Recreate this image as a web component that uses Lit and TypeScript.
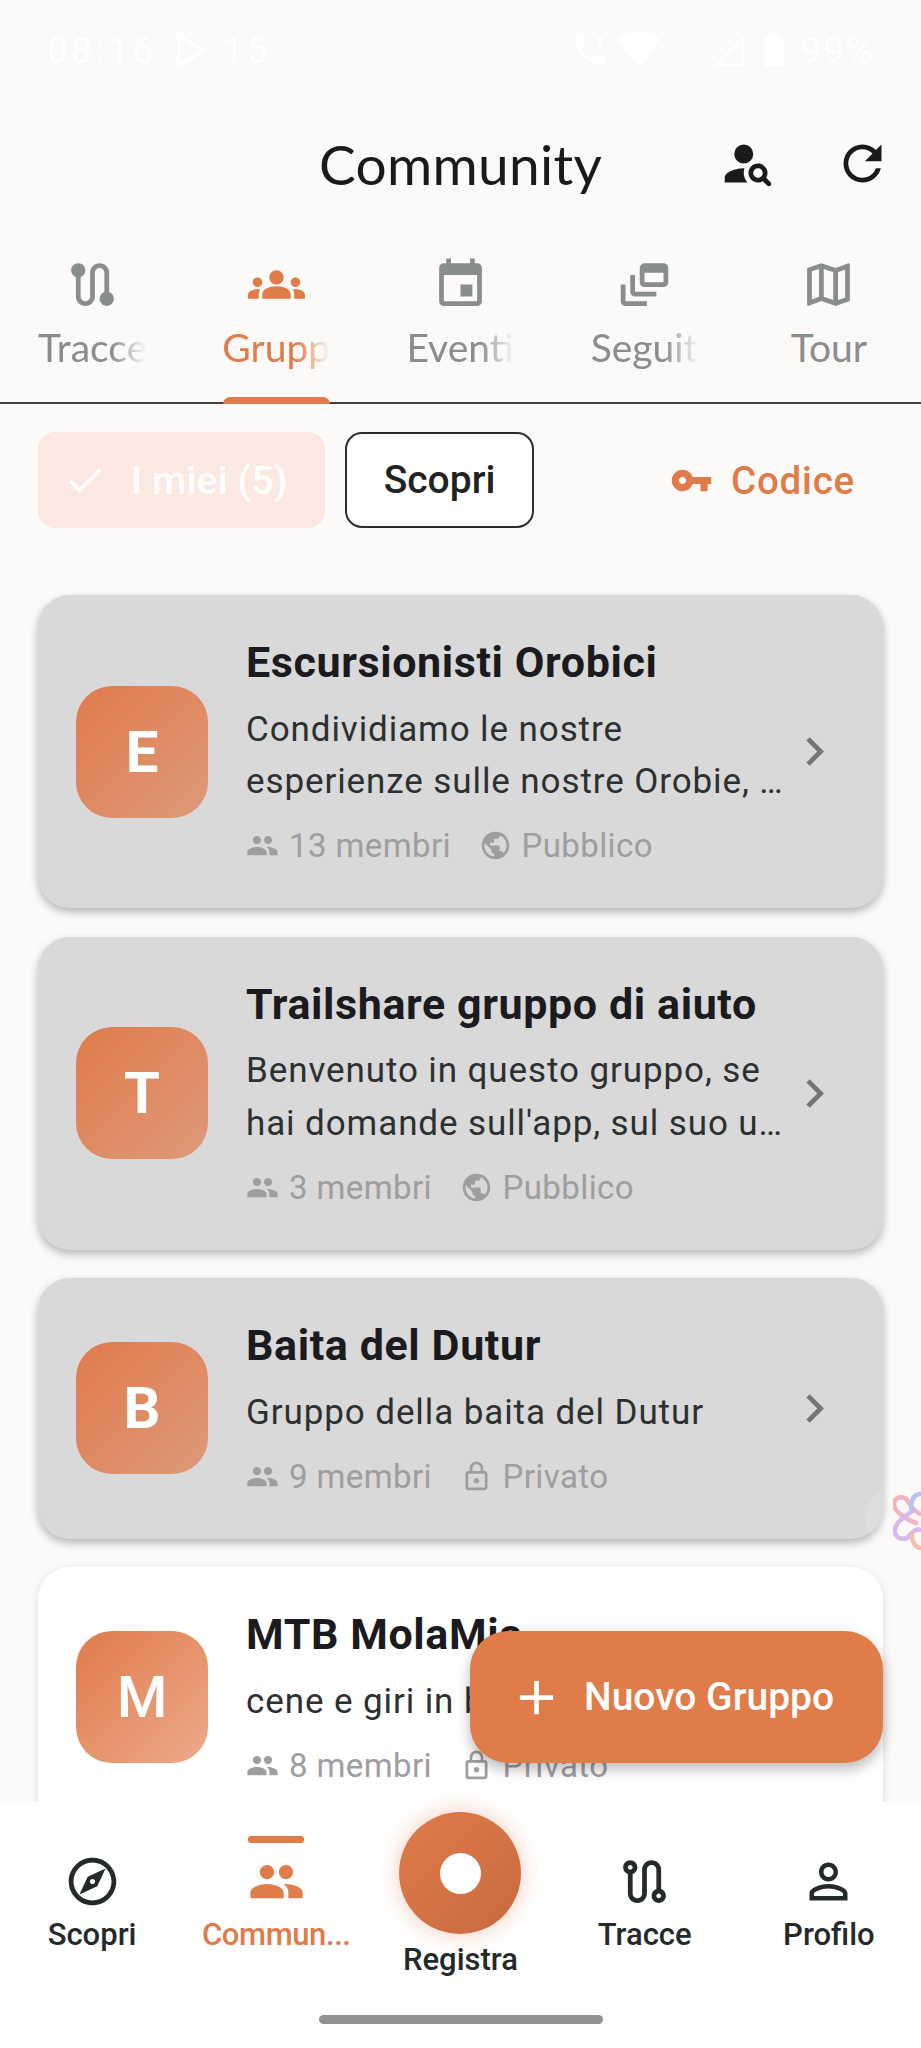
import { LitElement, html, css } from "lit";
import { customElement } from "lit/decorators.js";

const P = {
  route: "M19 15.18V7c0-2.21-1.79-4-4-4s-4 1.79-4 4v10c0 1.1-.9 2-2 2s-2-.9-2-2V8.82C8.16 8.4 9 7.3 9 6c0-1.66-1.34-3-3-3S3 4.34 3 6c0 1.3.84 2.4 2 2.82V17c0 2.21 1.79 4 4 4s4-1.79 4-4V7c0-1.1.9-2 2-2s2 .9 2 2v8.18c-1.16.41-2 1.51-2 2.82 0 1.66 1.34 3 3 3s3-1.34 3-3c0-1.3-.84-2.4-2-2.82z",
  routeOutline: "M19 15.18V7c0-2.21-1.79-4-4-4s-4 1.79-4 4v10c0 1.1-.9 2-2 2s-2-.9-2-2V8.82C8.16 8.4 9 7.3 9 6c0-1.66-1.34-3-3-3S3 4.34 3 6c0 1.3.84 2.4 2 2.82V17c0 2.21 1.79 4 4 4s4-1.79 4-4V7c0-1.1.9-2 2-2s2 .9 2 2v8.18c-1.16.41-2 1.51-2 2.82 0 1.66 1.34 3 3 3s3-1.34 3-3c0-1.3-.84-2.4-2-2.82zM6 5c.55 0 1 .45 1 1s-.45 1-1 1-1-.45-1-1 .45-1 1-1zm12 14c-.55 0-1-.45-1-1s.45-1 1-1 1 .45 1 1-.45 1-1 1z",
  groups: "M12 12.75c1.63 0 3.07.39 4.24.9 1.08.48 1.76 1.56 1.76 2.73V18H6v-1.61c0-1.18.68-2.26 1.76-2.73 1.17-.52 2.61-.91 4.24-.91zM4 13c1.1 0 2-.9 2-2s-.9-2-2-2-2 .9-2 2 .9 2 2 2zm1.13 1.1c-.37-.06-.74-.1-1.13-.1-.99 0-1.93.21-2.78.58C.48 14.9 0 15.62 0 16.43V18h4.5v-1.61c0-.83.23-1.61.63-2.29zM20 13c1.1 0 2-.9 2-2s-.9-2-2-2-2 .9-2 2 .9 2 2 2zm4 3.43c0-.81-.48-1.53-1.22-1.85-.85-.37-1.79-.58-2.78-.58-.39 0-.76.04-1.13.1.4.68.63 1.46.63 2.29V18H24v-1.57zM12 6c1.66 0 3 1.34 3 3s-1.34 3-3 3-3-1.34-3-3 1.34-3 3-3z",
  event: "M17 12h-5v5h5v-5zM16 1v2H8V1H6v2H5c-1.11 0-1.99.9-1.99 2L3 19c0 1.1.89 2 2 2h14c1.1 0 2-.9 2-2V5c0-1.1-.9-2-2-2h-1V1h-2zm3 18H5V8h14v11z",
  feed: "M8 8H6v7c0 1.1.9 2 2 2h9v-2H8V8zM20 3h-8c-1.1 0-2 .9-2 2v6c0 1.1.9 2 2 2h8c1.1 0 2-.9 2-2V5c0-1.1-.9-2-2-2zm0 8h-8V7h8v4zM4 12H2v7c0 1.1.9 2 2 2h9v-2H4v-7z",
  map: "M20.5 3l-.16.03L15 5.1 9 3 3.36 4.9c-.21.07-.36.25-.36.48V20.5c0 .28.22.5.5.5l.16-.03L9 18.9l6 2.1 5.64-1.9c.21-.07.36-.25.36-.48V3.5c0-.28-.22-.5-.5-.5zM10 5.47l4 1.4v11.66l-4-1.4V5.47zm-5 .99l3-1.01v11.7l-3 1.16V6.46zm14 11.08l-3 1.01V6.86l3-1.16v11.84z",
  key: "M12.65 10C11.83 7.67 9.61 6 7 6c-3.31 0-6 2.69-6 6s2.69 6 6 6c2.61 0 4.83-1.67 5.65-4H17v4h4v-4h2v-4H12.65zM7 14c-1.1 0-2-.9-2-2s.9-2 2-2 2 .9 2 2-.9 2-2 2z",
  check: "M9 16.17L4.83 12l-1.42 1.41L9 19 21 7l-1.41-1.41z",
  personSearch: "M10 4a4 4 0 1 0 0 8 4 4 0 0 0 0-8zM10.35 14.01C7.62 13.91 2 15.27 2 18v2h9.54c-2.47-2.76-1.23-5.97-1.19-5.99zM19.43 18.02c.47-.8.7-1.77.48-2.82-.34-1.64-1.72-2.95-3.38-3.16-2.63-.34-4.85 1.87-4.5 4.5.22 1.66 1.52 3.04 3.16 3.38 1.05.22 2.02-.01 2.82-.48l1.86 1.86c.39.39 1.02.39 1.41 0 .39-.39.39-1.02 0-1.41l-1.85-1.87zM16 18c-1.1 0-2-.9-2-2s.9-2 2-2 2 .9 2 2-.9 2-2 2z",
  refresh: "M17.65 6.35C16.2 4.9 14.21 4 12 4c-4.42 0-7.99 3.58-7.99 8s3.57 8 7.99 8c3.73 0 6.84-2.55 7.73-6h-2.08c-.82 2.33-3.04 4-5.65 4-3.31 0-6-2.69-6-6s2.69-6 6-6c1.66 0 3.14.69 4.22 1.78L13 11h7V4l-2.35 2.35z",
  people: "M16 11c1.66 0 2.99-1.34 2.99-3S17.66 5 16 5c-1.66 0-3 1.34-3 3s1.34 3 3 3zm-8 0c1.66 0 2.99-1.34 2.99-3S9.66 5 8 5C6.34 5 5 6.34 5 8s1.34 3 3 3zm0 2c-2.33 0-7 1.17-7 3.5V19h14v-2.5c0-2.33-4.67-3.5-7-3.5zm8 0c-.29 0-.62.02-.97.05 1.16.84 1.97 1.97 1.97 3.45V19h6v-2.5c0-2.33-4.67-3.5-7-3.5z",
  globe: "M12 2C6.48 2 2 6.48 2 12s4.48 10 10 10 10-4.48 10-10S17.52 2 12 2zm-1 17.93c-3.95-.49-7-3.85-7-7.93 0-.62.08-1.21.21-1.79L9 15v1c0 1.1.9 2 2 2v1.93zm6.9-2.54c-.26-.81-1-1.39-1.9-1.39h-1v-3c0-.55-.45-1-1-1H8v-2h2c.55 0 1-.45 1-1V7h2c1.1 0 2-.9 2-2v-.41c2.93 1.19 5 4.06 5 7.41 0 2.08-.8 3.97-2.1 5.39z",
  lock: "M18 8h-1V6c0-2.76-2.24-5-5-5S7 3.24 7 6v2H6c-1.1 0-2 .9-2 2v10c0 1.1.9 2 2 2h12c1.1 0 2-.9 2-2V10c0-1.1-.9-2-2-2zM9 6c0-1.66 1.34-3 3-3s3 1.34 3 3v2H9V6zm9 14H6V10h12v10zm-6-3c1.1 0 2-.9 2-2s-.9-2-2-2-2 .9-2 2 .9 2 2 2z",
  chevron: "M10 6L8.59 7.41 13.17 12l-4.58 4.59L10 18l6-6z",
  add: "M19 13h-6v6h-2v-6H5v-2h6V5h2v6h6v2z",
  explore: "M12 2C6.48 2 2 6.48 2 12s4.48 10 10 10 10-4.48 10-10S17.52 2 12 2zm0 18c-4.41 0-8-3.59-8-8s3.59-8 8-8 8 3.59 8 8-3.59 8-8 8zm-5.5-2.5l7.51-3.49L17.5 6.5 9.99 9.99 6.5 17.5zm5.5-6.6c.61 0 1.1.49 1.1 1.1s-.49 1.1-1.1 1.1-1.1-.49-1.1-1.1.49-1.1 1.1-1.1z",
  person: "M12 5.9c1.16 0 2.1.94 2.1 2.1s-.94 2.1-2.1 2.1S9.9 9.16 9.9 8s.94-2.1 2.1-2.1m0 9c2.97 0 6.1 1.46 6.1 2.1v1.1H5.9V17c0-.64 3.13-2.1 6.1-2.1M12 4C9.79 4 8 5.79 8 8s1.79 4 4 4 4-1.79 4-4-1.79-4-4-4zm0 9c-2.67 0-8 1.34-8 4v3h16v-3c0-2.66-5.33-4-8-4z",
  phone: "M20 15.5c-1.25 0-2.45-.2-3.57-.57-.35-.11-.74-.03-1.02.24l-2.2 2.2c-2.83-1.44-5.15-3.75-6.59-6.59l2.2-2.21c.28-.26.36-.65.25-1C8.7 6.45 8.5 5.25 8.5 4c0-.55-.45-1-1-1H4c-.55 0-1 .45-1 1 0 9.39 7.61 17 17 17 .55 0 1-.45 1-1v-3.5c0-.55-.45-1-1-1zM15 3h6l-3 7z",
  wifi: "M12 21L0 6.5C3.2 4 7.4 2.5 12 2.5S20.8 4 24 6.5z",
  signal: "M22 2v20H2zM20 7L7 20h13z",
  battery: "M9 2h6v2h2c.6 0 1 .4 1 1v16c0 .6-.4 1-1 1H7c-.6 0-1-.4-1-1V5c0-.6.4-1 1-1h2z",
  play: "M5 2l16 10-16 10zM7 6v12l10-6z",
};

const ico = (d: string, cls: string) =>
  html`<svg class=${cls} viewBox="0 0 24 24" fill="currentColor"><path d=${d}></path></svg>`;

type Group = { l: string; n: string; d: string; m: string; v: string; lock: boolean; plain?: boolean };
const GROUPS: Group[] = [
  { l: "E", n: "Escursionisti Orobici", d: "Condividiamo le nostre esperienze sulle nostre Orobie, …", m: "13 membri", v: "Pubblico", lock: false },
  { l: "T", n: "Trailshare gruppo di aiuto", d: "Benvenuto in questo gruppo, se hai domande sull'app, sul suo u…", m: "3 membri", v: "Pubblico", lock: false },
  { l: "B", n: "Baita del Dutur", d: "Gruppo della baita del Dutur", m: "9 membri", v: "Privato", lock: true },
  { l: "M", n: "MTB MolaMia", d: "cene e giri in bici", m: "8 membri", v: "Privato", lock: true, plain: true },
];

@customElement("app-root")
export class AppRoot extends LitElement {
  static styles = css`
    :host { display: block; width: 921px; height: 2048px; position: relative; overflow: hidden; background: #fbfaf8; font-family: Roboto, sans-serif; color: #1c1c1e; }
    .page { display: flex; flex-direction: column; height: 2048px; }
    .status { display: flex; align-items: center; height: 40px; padding: 30px 46px 10px 47px; color: #fff; font-size: 37px; font-weight: 400; letter-spacing: 3.5px; gap: 10px; }
    .status svg { width: 40px; height: 40px; flex: none; }
    .status .play { width: 46px; height: 46px; }
    .status .sp { flex: 1; }
    .status .right { display: flex; align-items: center; gap: 6px; letter-spacing: 2px; }
    .status .wifi { width: 46px; height: 46px; margin-right: 40px; }
    .head { display: grid; grid-template-columns: 1fr auto 1fr; align-items: center; height: 166px; }
    .title { font-family: Lato, sans-serif; font-size: 55px; font-weight: 400; color: #1a1a1a; letter-spacing: 0.3px; padding-top: 2px; }
    .actions { display: flex; justify-content: flex-end; gap: 57px; padding-right: 30px; color: #1a1a1a; }
    .i57 { width: 57px; height: 57px; display: block; flex: none; }
    .tabs { display: grid; grid-template-columns: repeat(5, 1fr); border-bottom: 2px solid #3f4241; height: 158px; box-sizing: border-box; padding-top: 10px; }
    .tab { display: flex; flex-direction: column; align-items: center; color: #8a8d8d; height: 146px; }
    .tab.on { color: #e07b4a; }
    .tlabel { width: 108px; height: 46px; margin-top: 11px; font-family: Lato, sans-serif; font-size: 39px; line-height: 46px; white-space: nowrap; overflow: hidden; -webkit-mask-image: linear-gradient(90deg, #000 68%, transparent 100%); mask-image: linear-gradient(90deg, #000 68%, transparent 100%); }
    .tlabel.whole { text-align: center; -webkit-mask-image: none; mask-image: none; }
    .tbar { width: 107px; height: 7px; margin-top: auto; margin-bottom: -2px; background: #e07b4a; border-radius: 7px 7px 0 0; position: relative; }
    .filters { display: flex; align-items: center; gap: 20px; padding: 28px 38px 0; }
    .chip { height: 96px; box-sizing: border-box; border-radius: 17px; display: flex; align-items: center; font-size: 39px; font-weight: 500; }
    .chip.sel { width: 287px; background: #fbe8e0; color: #fff; padding-left: 25px; gap: 24px; font-size: 39.5px; }
    .chip.sel svg { width: 44px; height: 44px; }
    .chip.out { width: 189px; justify-content: center; background: #fff; border: 2px solid #2b2d2d; color: #1f2323; }
    .code { margin-left: auto; display: flex; align-items: center; gap: 18px; color: #e07b4a; font-size: 38.5px; font-weight: 500; letter-spacing: .8px; padding-right: 28px; }
    .code svg { width: 43px; height: 43px; }
    .list { flex: 1; min-height: 0; overflow: hidden; display: flex; flex-direction: column; gap: 28.5px; padding: 67px 38px 0; }
    .card { flex: none; display: flex; align-items: center; background: #d9d9d9; border-radius: 32px; padding: 42.25px 40px 42.25px 38px; box-shadow: 0 4px 9px rgba(0,0,0,.28); }
    .card.plain { background: #fff; box-shadow: 0 2px 8px rgba(0,0,0,.12); }
    .avatar { flex: none; width: 132px; height: 132px; border-radius: 36px; display: flex; align-items: center; justify-content: center; color: #fff; font-size: 58px; font-weight: 700; background: linear-gradient(135deg, #e07b4a, #dd9a7c); }
    .plain .avatar { background: linear-gradient(135deg, #e07b4a, #ecaa8b); font-weight: 500; }
    .body { flex: 1; min-width: 0; margin-left: 38px; }
    .name { font-size: 43px; line-height: 50px; font-weight: 700; color: #1b1b1f; white-space: nowrap; letter-spacing: .6px; }
    .desc { margin-top: 16.5px; font-size: 35px; line-height: 52.5px; color: #2c3030; letter-spacing: .9px; }
    .meta { margin-top: 17px; height: 40px; display: flex; align-items: center; color: #9e9e9e; font-size: 33px; letter-spacing: .4px; }
    .meta svg { width: 33px; height: 33px; flex: none; margin-right: 10px; }
    .meta .m2 { margin-left: 27.5px; }
    .chev { color: #757575; }
    .nav { flex: none; height: 246px; background: #fff; display: flex; flex-direction: column; position: relative; }
    .navgrid { display: grid; grid-template-columns: repeat(5, 1fr); }
    .nitem { display: flex; flex-direction: column; align-items: center; color: #242a2a; padding-top: 34px; }
    .nitem.on { color: #e07b4a; }
    .nbar { width: 56px; height: 7px; border-radius: 3px; background: transparent; }
    .on .nbar { background: #e07b4a; }
    .nitem .i57 { margin-top: 10px; }
    .nlabel { margin-top: 5px; font-size: 31px; line-height: 40px; font-weight: 500; white-space: nowrap; }
    .on .nlabel { letter-spacing: -.4px; }
    .rec { display: flex; flex-direction: column; align-items: center; padding-top: 10px; color: #242a2a; }
    .recbtn { width: 122px; height: 122px; border-radius: 50%; background: linear-gradient(135deg, #e07b4a, #c86a3e); box-shadow: 0 0 22px rgba(224,123,74,.4); display: flex; align-items: center; justify-content: center; }
    .dot { width: 41px; height: 41px; border-radius: 50%; background: #fff; }
    .rec .nlabel { margin-top: 6px; }
    .home { width: 284px; height: 9px; border-radius: 5px; background: #929292; align-self: center; margin-top: 35px; }
    .fab { position: absolute; left: 470px; top: 1631px; width: 413px; height: 132px; box-sizing: border-box; border-radius: 38px; background: #e07b4a; box-shadow: 0 6px 14px rgba(0,0,0,.28); display: flex; align-items: center; padding-left: 38px; gap: 19px; color: #fff; font-size: 39px; font-weight: 500; }
    .bubble { position: absolute; left: 865px; top: 1478px; width: 110px; height: 80px; border-radius: 50%; background: rgba(255,255,255,.13); }
    .knot { position: absolute; left: 893px; top: 1490px; width: 28px; height: 62px; fill: none; stroke-width: 4.5; stroke-linecap: round; }
  `;

  private tab(d: string, label: string, on = false, whole = false) {
    return html`<div class="tab ${on ? "on" : ""}">
      ${ico(d, "i57")}
      <div class="tlabel ${whole ? "whole" : ""}">${label}</div>
      ${on ? html`<div class="tbar"></div>` : ""}
    </div>`;
  }

  private nitem(d: string, label: string, on = false) {
    return html`<div class="nitem ${on ? "on" : ""}">
      <div class="nbar"></div>
      ${ico(d, "i57")}
      <div class="nlabel">${label}</div>
    </div>`;
  }

  private card(g: Group) {
    return html`<div class="card ${g.plain ? "plain" : ""}">
      <div class="avatar">${g.l}</div>
      <div class="body">
        <div class="name">${g.n}</div>
        <div class="desc">${g.d}</div>
        <div class="meta">
          ${ico(P.people, "")}<span>${g.m}</span>
          <span class="m2"></span>${ico(g.lock ? P.lock : P.globe, "")}<span>${g.v}</span>
        </div>
      </div>
      ${ico(P.chevron, "i57 chev")}
    </div>`;
  }

  render() {
    return html`<div class="page">
        <div class="status">
          <span>08:16</span>${ico(P.play, "play")}<span>15</span>
          <span class="sp"></span>
          <div class="right">
            ${ico(P.phone, "")}${ico(P.wifi, "wifi")}${ico(P.signal, "")}${ico(P.battery, "")}<span>99%</span>
          </div>
        </div>
        <div class="head">
          <span></span>
          <div class="title">Community</div>
          <div class="actions">${ico(P.personSearch, "i57")}${ico(P.refresh, "i57")}</div>
        </div>
        <div class="tabs">
          ${this.tab(P.route, "Tracce")}
          ${this.tab(P.groups, "Gruppi", true)}
          ${this.tab(P.event, "Eventi")}
          ${this.tab(P.feed, "Seguiti")}
          ${this.tab(P.map, "Tour", false, true)}
        </div>
        <div class="filters">
          <div class="chip sel">${ico(P.check, "")}<span>I miei (5)</span></div>
          <div class="chip out">Scopri</div>
          <div class="code">${ico(P.key, "")}<span>Codice</span></div>
        </div>
        <div class="list">${GROUPS.map((g) => this.card(g))}</div>
        <div class="nav">
          <div class="navgrid">
            ${this.nitem(P.explore, "Scopri")}
            ${this.nitem(P.people, "Commun...", true)}
            <div class="rec"><div class="recbtn"><div class="dot"></div></div><div class="nlabel">Registra</div></div>
            ${this.nitem(P.routeOutline, "Tracce")}
            ${this.nitem(P.person, "Profilo")}
          </div>
          <div class="home"></div>
        </div>
      </div>
      <div class="bubble"></div>
      <svg class="knot" viewBox="0 0 28 62">
        <path stroke="#f2b4bd" d="M23 33C14 30 1 22 1 14 1 7 10 5 14 10c3 4 6 12 14 14"></path>
        <path stroke="#d9b8f2" d="M18 22C10 28 1 33 2 42c1 7 10 9 14 4 3-3 6-8 12-6"></path>
        <path stroke="#b9c0f5" d="M19 21c-2-7 0-17 9-17"></path>
        <path stroke="#f5bdaa" d="M19 44c-1 6 3 14 9 14"></path>
      </svg>
      <div class="fab">${ico(P.add, "i57")}<span>Nuovo Gruppo</span></div>`;
  }
}
